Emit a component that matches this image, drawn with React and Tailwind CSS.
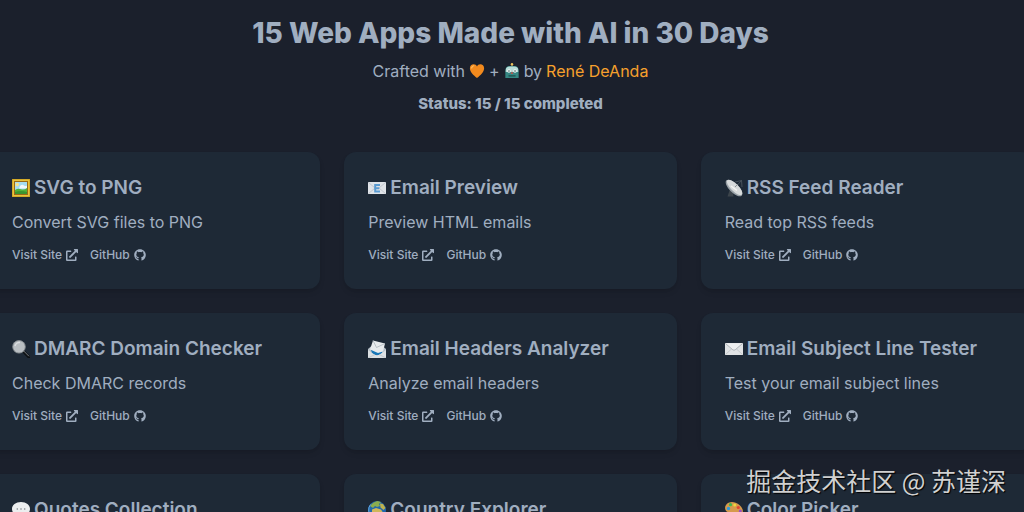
import { FaExternalLinkAlt, FaGithub } from "react-icons/fa";

const icons = {
  picture: (
    <>
      <rect width="18" height="18" fill="#c79a1d" />
      <rect x="0.6" y="0.6" width="16.8" height="16.8" fill="#e9c23b" />
      <rect x="2" y="2" width="14" height="14" fill="#9a6a16" />
      <rect x="3" y="3" width="12" height="12" fill="#a5dcf2" />
      <circle cx="5.2" cy="5.6" r="1.8" fill="#f6e48a" />
      <path d="M8 7q2-2 4-.6t3 0v3H7z" fill="#f1f8fb" />
      <path d="M3 11q3-2 6-.8T15 9v6H3z" fill="#54b23a" />
      <path d="M3 13q6-2 12 0v2H3z" fill="#3c9430" />
    </>
  ),
  email: (
    <>
      <rect y="3" width="18" height="12" rx="0.6" fill="#dfe3e8" />
      <path d="M0.5 3.5 7 9 .5 14.6M17.5 3.5 11 9l6.5 5.6" fill="none" stroke="#b3b9c2" strokeWidth="0.7" />
      <path d="M12 6H7.2v6.5H12M7.200 9.200h4" fill="none" stroke="#5a9ad0" strokeWidth="2" />
    </>
  ),
  satellite: (
    <>
      <path d="M5 10 2.500 17.500h6L8 13z" fill="#3c444b" />
      <path d="M12 6.500 16.500 1.500M16.500 1.500 17 8M16.500 1.500 10 3" fill="none" stroke="#566069" strokeWidth="0.7" />
      <ellipse cx="9" cy="9" rx="10.8" ry="4.6" transform="rotate(45 9 9)" fill="#98a0a6" />
      <ellipse cx="9.6" cy="8.4" rx="10.2" ry="3.8" transform="rotate(45 9.6 8.4)" fill="#d7dadb" />
      <path d="m6 7 6 4.500" stroke="#f5f5f3" strokeWidth="1.5" />
      <path d="m10 8 3-3" stroke="#767d82" strokeWidth="0.8" />
    </>
  ),
  search: (
    <>
      <path d="m11 11 6 6" stroke="#0e1114" strokeWidth="3" strokeLinecap="round" />
      <path d="m11.500 10.800 5.500 5.500" stroke="#777b7f" strokeWidth="1" />
      <circle cx="7" cy="6.8" r="6.3" fill="#b9bec2" stroke="#858a8e" strokeWidth="0.9" />
      <path d="M3 6a4.500 4.500 0 0 1 5-3.500" fill="none" stroke="#dadddf" strokeWidth="1.5" />
    </>
  ),
  incoming: (
    <>
      <path d="M0 9 3.500 6h11L18 9v9H0z" fill="#b9c2ca" />
      <path d="m3 10 12-1-1 4-5 3-5-3z" fill="#1877b8" />
      <path d="M5 .5 17 3.500l-2 8-5 1.500-8-3.500z" fill="#e8ebed" />
      <path d="m5 .5 3.500 7L17 3.500" fill="none" stroke="#a4adb5" strokeWidth="0.7" />
      <path d="m0 10 6 4.500q3 1.500 6 0l6-4.500v8H0z" fill="#dce0e3" />
      <path d="m0 18 7-3.500M18 18l-7-3.500" stroke="#afb7bd" strokeWidth="0.6" />
    </>
  ),
  envelope: (
    <>
      <rect y="3" width="18" height="12" rx="0.6" fill="#e0e2e4" />
      <path d="m.5 14.500 6-5.500M17.500 14.500l-6-5.500" stroke="#b9bdc1" strokeWidth="0.7" />
      <path d="m.5 3.500 7.300 6.300q1.200.9 2.400 0l7.300-6.300" fill="#eff0f1" stroke="#a1a7ac" strokeWidth="0.8" />
    </>
  ),
  speech: (
    <>
      <path d="M9 1C3.800 1 0 4 0 8c0 2.400 1.200 4.300 3.200 5.500L2.500 17l4-2.300L9 15c5.200 0 9-3 9-7s-3.800-7-9-7z" fill="#eceeef" />
      <g fill="#7b8085">
        <circle cx="5.3" cy="8" r="0.8" />
        <circle cx="9" cy="8" r="0.8" />
        <circle cx="12.7" cy="8" r="0.8" />
      </g>
    </>
  ),
  globe: (
    <>
      <circle cx="9" cy="9" r="9" fill="#2168ad" />
      <path d="M2 5Q5 1 9.500 0L13 1l-2 2 1 2-3 1-2-1-2 2z" fill="#8bad4e" />
      <path d="M4 8.500 8 7l5 1.500 2 3-3 1.500-1 4-2.500 1L7 13l-3-1.500z" fill="#d0b75a" />
      <path d="M12 2.500 15 3l2.500 4-2 2-3-2.500z" fill="#bdb24e" />
      <path d="M2.500 3.500A9 9 0 0 0 4 16" fill="none" stroke="#64a6dd" strokeWidth="1" />
    </>
  ),
  palette: (
    <>
      <path d="M7 1C2.500 1-.5 4.500.2 8c.6 3 3 3.300 5 3.200 2-.1 2.500 1 2.300 2.600C7.300 16 9 17.500 12 17c4-.6 6.500-4 5.800-7.800C17 5 12 1 7 1z" fill="#d69a4c" />
      <ellipse cx="12.5" cy="13" rx="1.8" ry="1.4" fill="#1e2936" />
      <circle cx="3.5" cy="7.5" r="1.7" fill="#2d9be0" />
      <circle cx="5.5" cy="3.7" r="1.6" fill="#3fb650" />
      <circle cx="9.7" cy="4" r="1.5" fill="#efd63c" />
      <circle cx="13.3" cy="6.5" r="1.6" fill="#e34432" />
      <circle cx="15.3" cy="10" r="1.5" fill="#9b4fc2" />
    </>
  ),
  heart: (
    <>
      <path d="M9 17C5 13.500 1 10 1 5.800 1 3 3 1.300 5.200 1.300 7 1.300 8.300 2.300 9 3.800c.7-1.500 2-2.500 3.800-2.500C15 1.300 17 3 17 5.800 17 10 13 13.500 9 17z" fill="#f28a1e" />
      <path d="M3 5.500q.3-2 2.300-2.400" fill="none" stroke="#ffc267" strokeWidth="1.4" strokeLinecap="round" />
    </>
  ),
  robot: (
    <>
      <path d="M9 1v4" stroke="#b9a26b" strokeWidth="1.2" />
      <circle cx="9" cy="1.5" r="1.4" fill="#eac15a" />
      <path d="M1.500 9q0-5.500 5-5.500h5q5 0 5 5.500v8h-15z" fill="#358783" />
      <path d="M2 8q0-4 4.500-4h5Q16 4 16 8v2H2z" fill="#b9ddd9" />
      <circle cx="5.6" cy="9" r="2" fill="#f4f7f6" />
      <circle cx="12.4" cy="9" r="2" fill="#f4f7f6" />
      <circle cx="5.6" cy="9" r="0.9" fill="#31595b" />
      <circle cx="12.4" cy="9" r="0.9" fill="#31595b" />
      <path d="m9 9.500-1.500 2.500h3z" fill="#d34e43" />
      <path d="M5 14.500h8" stroke="#1d5552" strokeWidth="1.6" />
    </>
  ),
};

const apps = [
  { icon: "picture", name: "SVG to PNG", description: "Convert SVG files to PNG" },
  { icon: "email", name: "Email Preview", description: "Preview HTML emails" },
  { icon: "satellite", name: "RSS Feed Reader", description: "Read top RSS feeds" },
  { icon: "search", name: "DMARC Domain Checker", description: "Check DMARC records" },
  { icon: "incoming", name: "Email Headers Analyzer", description: "Analyze email headers" },
  { icon: "envelope", name: "Email Subject Line Tester", description: "Test your email subject lines" },
  { icon: "speech", name: "Quotes Collection" },
  { icon: "globe", name: "Country Explorer" },
  { icon: "palette", name: "Color Picker" },
];

function Emoji({ name, className }) {
  return (
    <svg viewBox="0 0 18 18" className={className} aria-hidden="true">
      {icons[name]}
    </svg>
  );
}

function AppCard({ app }) {
  return (
    <article className="rounded-xl bg-[#1e2936] p-6 shadow-md">
      <h2 className="flex items-center gap-1 whitespace-nowrap text-[19px] leading-6 font-semibold">
        <Emoji name={app.icon} className="size-[18px] shrink-0" />
        {app.name}
      </h2>
      {app.description && (
        <>
          <p className="mt-2.5 text-base leading-6">{app.description}</p>
          <div className="mt-2.5 flex gap-3 text-xs leading-[21px] font-medium">
            <a href="#" className="flex items-center gap-1">
              Visit Site <FaExternalLinkAlt className="size-3" />
            </a>
            <a href="#" className="flex items-center gap-1">
              GitHub <FaGithub className="size-3" />
            </a>
          </div>
        </>
      )}
    </article>
  );
}

export default function App() {
  return (
    <div className="relative h-screen overflow-hidden bg-[#1b202c] font-['Inter',sans-serif] text-[#a0aec0]">
      <div className="-mr-[9px] -ml-3">
        <header className="pt-[13px] text-center">
          <h1 className="text-[28px] leading-10 font-extrabold">15 Web Apps Made with AI in 30 Days</h1>
          <p className="mt-1.5 flex items-center justify-center gap-1 text-base leading-6">
            Crafted with
            <Emoji name="heart" className="size-4" />
            +
            <Emoji name="robot" className="size-4" />
            by
            <a href="#" className="text-[#f6a02d]">René DeAnda</a>
          </p>
          <p className="mt-[9px] text-[15px] leading-6 font-extrabold">Status: 15 / 15 completed</p>
        </header>
        <main className="mt-9 grid grid-cols-3 gap-6">
          {apps.map((app) => (
            <AppCard key={app.name} app={app} />
          ))}
        </main>
      </div>
      <p className="absolute right-[18px] bottom-[14px] font-['Noto_Sans_CJK_SC',sans-serif] text-[25px] leading-9 text-[#d0d0d0] [text-shadow:1px_1px_1px_#000]">
        掘金技术社区 @ 苏谨深
      </p>
    </div>
  );
}
